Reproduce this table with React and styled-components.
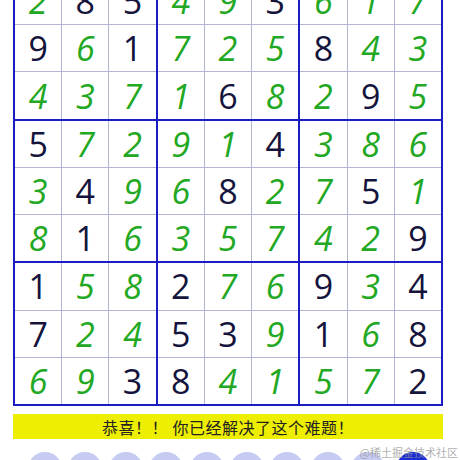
import styled, { createGlobalStyle } from 'styled-components'

const GlobalStyle = createGlobalStyle`
	body {
		margin: 0;
		background: #ffffff;
		font-family: "Open Sans", "Noto Sans CJK SC", sans-serif;
		overflow: hidden;
	}
`

const ROWS = [
	['285493617', '100110111'],
	['961725843', '010111011'],
	['437168295', '111101101'],
	['572914386', '011110111'],
	['349682751', '101101101'],
	['816357429', '101111110'],
	['158276934', '011011010'],
	['724539168', '011001010'],
	['693841572', '110011110'],
]

const Page = styled.div`
	width: 430px;
	margin: -24px 0 0 13px;
	position: relative;
`

const Board = styled.div`
	display: grid;
	grid-template-columns: repeat(3, 1fr);
	gap: 2px;
	padding: 2px;
	background: #1c1cc4;
	width: 430px;
	height: 430px;
	box-sizing: border-box;
`

const Box = styled.div`
	display: grid;
	grid-template-columns: repeat(3, 1fr);
	grid-template-rows: repeat(3, 1fr);
	gap: 1px;
	background: #b4b4d4;
`

const Cell = styled.div`
	background: #ffffff;
	display: flex;
	align-items: center;
	justify-content: center;
	font-size: 34px;
	line-height: 1;
	color: ${p => (p.$filled ? '#22a822' : '#14143c')};
	font-style: ${p => (p.$filled ? 'italic' : 'normal')};
`

const Banner = styled.div`
	margin-top: 8px;
	height: 25px;
	background: #eeee00;
	display: flex;
	align-items: center;
	justify-content: center;
	font-size: 16px;
	color: #222222;
	letter-spacing: 0.5px;
`

const Keys = styled.div`
	display: flex;
	gap: 6.4px;
	margin-top: 13px;
	padding-left: 15px;
`

const Key = styled.div`
	width: 34px;
	height: 34px;
	border-radius: 50%;
	flex-shrink: 0;
	background: ${p => (p.$active ? '#1a2ed4' : '#c6cbf2')};
	margin-left: ${p => (p.$active ? '4px' : '0')};
`

const Watermark = styled.div`
	position: absolute;
	right: -15px;
	top: 470px;
	font-size: 11px;
	line-height: 13px;
	color: rgba(150, 150, 150, 0.75);
	font-family: "Noto Sans CJK SC", sans-serif;
`

const cellAt = (r, c) => {
	const [digits, mask] = ROWS[r]
	return { d: digits[c], g: mask[c] === '1' }
}

export default function App() {
	return (
		<>
			<GlobalStyle />
			<Page>
				<Board>
					{[0, 1, 2, 3, 4, 5, 6, 7, 8].map(b => (
						<Box key={b}>
							{[0, 1, 2, 3, 4, 5, 6, 7, 8].map(i => {
								const r = Math.floor(b / 3) * 3 + Math.floor(i / 3)
								const c = (b % 3) * 3 + (i % 3)
								const cell = cellAt(r, c)
								return (
									<Cell key={i} $filled={cell.g}>
										{cell.d}
									</Cell>
								)
							})}
						</Box>
					))}
				</Board>
				<Banner>恭喜！！ 你已经解决了这个难题！</Banner>
				<Keys>
					{[1, 2, 3, 4, 5, 6, 7, 8, 9].map(n => (
						<Key key={n} />
					))}
					<Key $active />
				</Keys>
				<Watermark>@稀土掘金技术社区</Watermark>
			</Page>
		</>
	)
}
